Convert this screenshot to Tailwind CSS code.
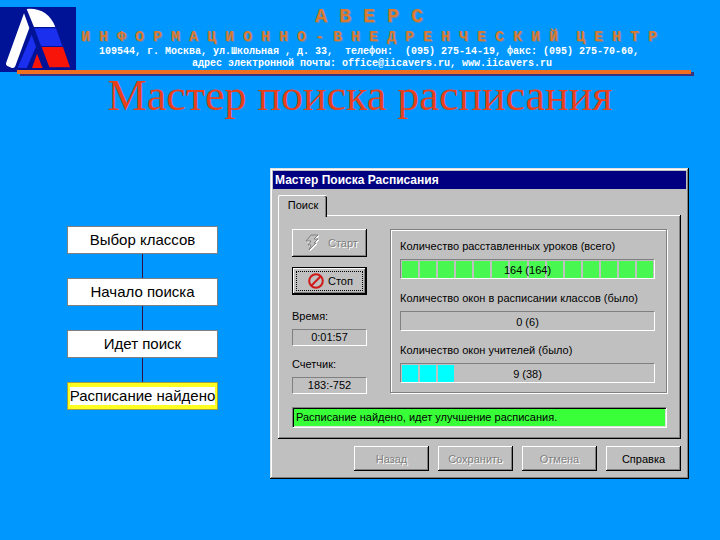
<!DOCTYPE html>
<html lang="ru">

<head>
    <meta charset="UTF-8">
    <meta name="viewport" content="width=device-width, initial-scale=1.0">
    <title>Мастер поиска расписания</title>
    <script src="https://cdn.jsdelivr.net/npm/@tailwindcss/browser@4"></script>
</head>

<body class="min-h-screen bg-[#0098ff] font-['Liberation_Sans',Arial,sans-serif] text-black">
<!-- Header -->
<header class="flex">
    <svg class="mt-[7px] h-[65px] w-[76px] shrink-0" viewBox="0 21 228 195" role="img" aria-label="Аверс">
        <rect x="0" y="21" width="228" height="195" fill="#001296"/>
        <path d="M72 40 L88 84 L46 198 Q43 206 34 203 L22 198 Q16 195 19 187 Z" fill="#fff"/>
        <path d="M95 104 L108 140 L80 204 L53 203 Z" fill="#1a30ee"/>
        <path d="M111 161 L128 204 L96 204 Z" fill="#f81408"/>
        <path d="M80 27 Q142 22 166 81 L102 81 Z" fill="#fff"/>
        <path d="M103 85 L168 85 L187 138 L123 138 Z" fill="#1a30ee"/>
        <path d="M125 141 L189 141 L210 202 L148 202 Z" fill="#f81408"/>
    </svg>
    <div class="flex-1 pt-[5px] pr-[58px] text-center font-['Liberation_Mono','Courier_New',monospace] font-bold">
        <p class="text-[20px] leading-[24px] whitespace-pre text-[#d97a30] [text-shadow:1px_1px_#5c88a8]">А В Е Р С</p>
        <p class="text-[15px] leading-[17px] whitespace-pre text-[#d97a30] [text-shadow:1px_1px_#5c88a8]">И Н Ф О Р М А Ц И О Н Н О - В Н Е Д Р Е Н Ч Е С К И Й  Ц Е Н Т Р</p>
        <p class="text-[10px] leading-[12px] whitespace-pre text-white">109544, г. Москва, ул.Школьная , д. 33,  телефон:  (095) 275-14-19, факс: (095) 275-70-60,</p>
        <p class="text-[10px] leading-[12px] whitespace-pre text-white"> адрес электронной почты: office@iicavers.ru, www.iicavers.ru</p>
    </div>
</header>
<hr class="relative -mt-[2px] mr-[29px] ml-[17px] h-1 border-0 bg-[#f07020] shadow-[3px_2px_#3a3480]">

<h1 class="text-center font-['Liberation_Serif','Times_New_Roman',serif] text-[44px] leading-[44px] text-[#e6401c]">Мастер поиска расписания</h1>

<main class="mt-[50px] flex items-start gap-[52px] pr-[31px] pl-[67px]">
    <!-- Steps -->
    <ol class="mt-[58px] flex w-[151px] shrink-0 flex-col items-center text-[15px] leading-[26px]">
        <li class="h-7 w-full border border-[#808080] bg-white text-center whitespace-nowrap">Выбор классов</li>
        <li class="h-6 w-px bg-[#301040]" aria-hidden="true"></li>
        <li class="h-7 w-full border border-[#808080] bg-white text-center whitespace-nowrap">Начало поиска</li>
        <li class="h-6 w-px bg-[#301040]" aria-hidden="true"></li>
        <li class="h-7 w-full border border-[#808080] bg-white text-center whitespace-nowrap">Идет поиск</li>
        <li class="h-6 w-px bg-[#301040]" aria-hidden="true"></li>
        <li class="flex h-7 w-full justify-center border border-[#a0a040] bg-[#ffff20] py-1 leading-[18px] whitespace-nowrap"><span class="bg-white">Расписание найдено</span></li>
    </ol>

    <!-- Wizard window -->
    <section class="min-w-0 flex-1 bg-[#c0c0c0] p-[3px] text-[11px] leading-[16px] shadow-[inset_-1px_-1px_#000,inset_1px_1px_#dfdfdf,inset_-2px_-2px_#808080,inset_2px_2px_#fff]">
        <h2 class="bg-[#000080] pl-[2px] text-[12px] font-bold leading-[18px] text-white">Мастер Поиска Расписания</h2>
        <div class="px-[5px] pt-[6px] pb-[5px]">
            <div role="tablist">
                <button type="button" role="tab" id="tabSearch" aria-selected="true" aria-controls="panelSearch"
                        class="relative block h-[22px] w-[49px] rounded-t-[2px] border-t border-l border-white bg-[#c0c0c0] pb-[3px] shadow-[inset_-1px_0_#000,inset_-2px_0_#808080]">Поиск</button>
            </div>
            <div role="tabpanel" id="panelSearch" aria-labelledby="tabSearch"
                 class="-mt-[2px] px-[14px] pt-[14px] pb-[11px] shadow-[inset_-1px_-1px_#000,inset_1px_1px_#fff,inset_-2px_-2px_#808080]">
                <div class="flex gap-[23px]">
                    <div class="flex w-[75px] shrink-0 flex-col">
                        <button type="button" disabled
                                class="flex h-7 items-center gap-[7px] pl-[13px] text-[#808080] shadow-[inset_-1px_-1px_#000,inset_1px_1px_#fff,inset_-2px_-2px_#808080] [text-shadow:1px_1px_#fff]">
                            <svg class="h-[18px] w-4 shrink-0" viewBox="0 0 16 18" fill="none" aria-hidden="true">
                                <path d="M7 2H14L10 6H14L10 10H12L5 17L7 12H4L7 8H2Z" fill="#fff" stroke="#fff"/>
                                <path d="M6 1H13L9 5H13L9 9H11L4 16L6 11H3L6 7H1Z" fill="#c0c0c0" stroke="#808080"/>
                            </svg>
                            Старт
                        </button>
                        <button type="button"
                                class="mt-[10px] h-7 border border-black p-[3px] shadow-[inset_-1px_-1px_#000,inset_1px_1px_#fff,inset_-2px_-2px_#808080]">
                            <span class="flex h-full items-center gap-1 border border-dotted border-black pl-[11px]">
                                <svg class="h-4 w-4 shrink-0" viewBox="0 0 16 16" fill="none" stroke="#d01818" stroke-width="2" aria-hidden="true">
                                    <circle cx="8" cy="8" r="6.8"/>
                                    <path d="M3.5 12.5L12.5 3.5"/>
                                </svg>
                                Стоп
                            </span>
                        </button>
                        <label for="time" class="mt-[13px]">Время:</label>
                        <output id="time" class="mt-[5px] block border border-t-[#808080] border-r-white border-b-white border-l-[#808080] text-center leading-[15px]">0:01:57</output>
                        <label for="counter" class="mt-[10px]">Счетчик:</label>
                        <output id="counter" class="mt-[5px] block border border-t-[#808080] border-r-white border-b-white border-l-[#808080] text-center leading-[15px]">183:-752</output>
                    </div>

                    <!-- Progress bars -->
                    <div id="bars" class="flex h-[164px] min-w-0 flex-1 flex-col gap-[11px] border border-[#808080] pt-[8px] pr-[11px] pl-[9px] shadow-[inset_1px_1px_#fff,1px_1px_#fff]"></div>
                </div>
                <p role="status" class="mt-[13px] border border-t-[#808080] border-r-white border-b-white border-l-[#808080] bg-[#38ff38] pl-[3px] leading-[19px] shadow-[inset_1px_1px_#000,inset_-1px_-1px_#dfdfdf]">Расписание найдено, идет улучшение расписания.</p>
            </div>
            <div class="mt-[7px] flex justify-end gap-[9px]">
                <button type="button" disabled class="h-[25px] w-[75px] text-[#808080] shadow-[inset_-1px_-1px_#000,inset_1px_1px_#fff,inset_-2px_-2px_#808080] [text-shadow:1px_1px_#fff]">Назад</button>
                <button type="button" disabled class="h-[25px] w-[75px] text-[#808080] shadow-[inset_-1px_-1px_#000,inset_1px_1px_#fff,inset_-2px_-2px_#808080] [text-shadow:1px_1px_#fff]">Сохранить</button>
                <button type="button" disabled class="h-[25px] w-[75px] text-[#808080] shadow-[inset_-1px_-1px_#000,inset_1px_1px_#fff,inset_-2px_-2px_#808080] [text-shadow:1px_1px_#fff]">Отмена</button>
                <button type="button" class="h-[25px] w-[75px] shadow-[inset_-1px_-1px_#000,inset_1px_1px_#fff,inset_-2px_-2px_#808080]">Справка</button>
            </div>
        </div>
    </section>
</main>

<script>
    const bars = [
        {title: 'Количество расставленных уроков (всего)', text: '164 (164)', filled: 14, color: 'bg-[#48f850]'},
        {title: 'Количество окон в расписании классов (было)', text: '0 (6)', filled: 0, color: 'bg-[#48f850]'},
        {title: 'Количество окон учителей (было)', text: '9 (38)', filled: 3, color: 'bg-[#00ffff]'},
    ]
    const segments = 14

    const renderBar = ({title, text, filled, color}, index) => {
        const cells = Array.from({length: segments}, (_, i) => `<i class="flex-1 ${i < filled ? color : ''}"></i>`).join('')
        return `
            <div>
                <div id="bar-${index}" class="whitespace-nowrap">${title}</div>
                <div role="progressbar" aria-labelledby="bar-${index}" aria-valuetext="${text}"
                     class="mt-[5px] grid h-5 border border-t-[#808080] border-r-white border-b-white border-l-[#808080] p-px">
                    <div class="col-start-1 row-start-1 flex gap-[2px]">${cells}</div>
                    <span class="z-10 col-start-1 row-start-1 pt-px text-center">${text}</span>
                </div>
            </div>`
    }

    document.getElementById('bars').innerHTML = bars.map(renderBar).join('')
</script>
</body>

</html>
